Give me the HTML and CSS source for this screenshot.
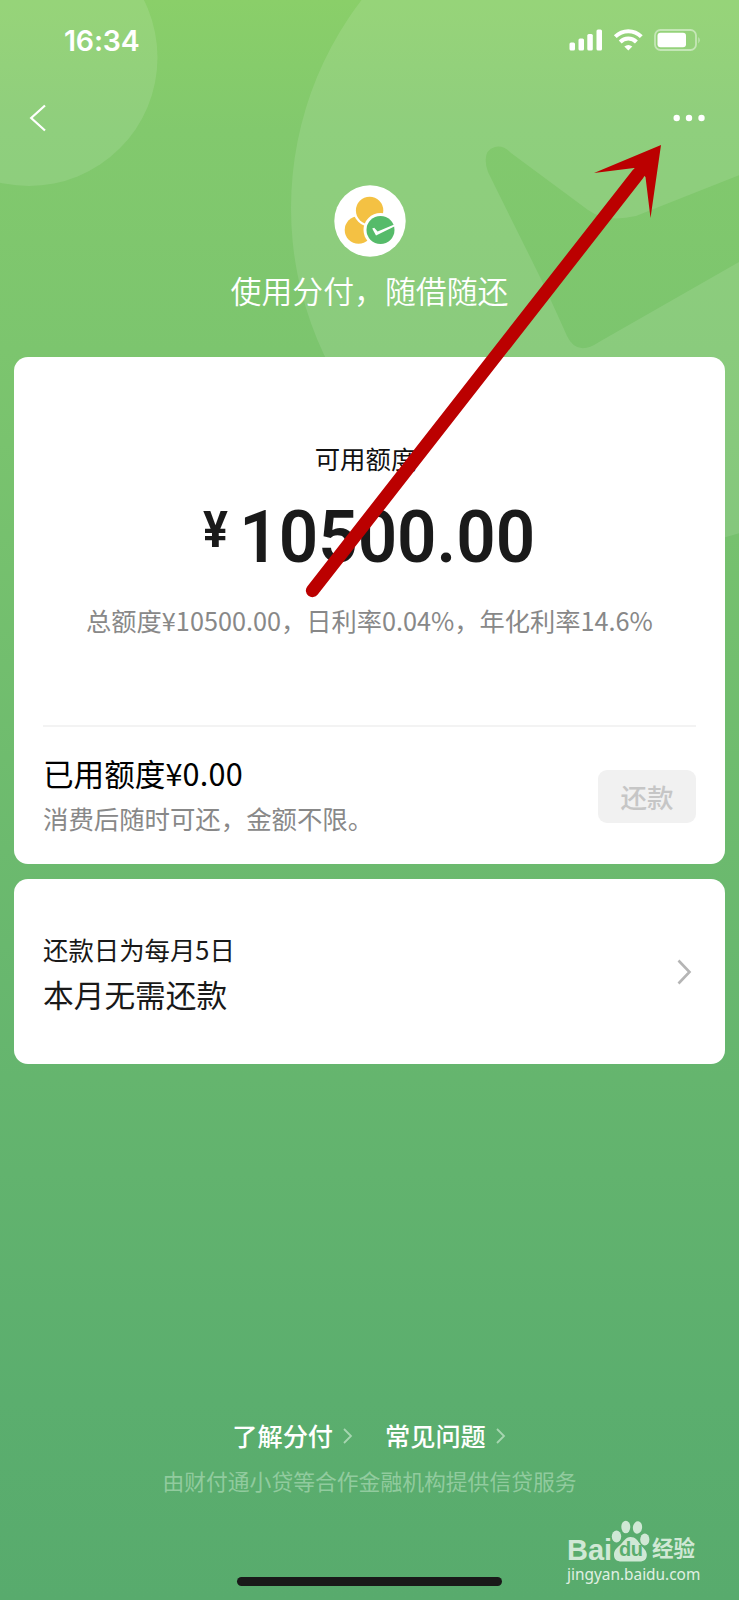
FILE: index.html
```html
<!DOCTYPE html>
<html lang="zh-CN">
<head>
<meta charset="utf-8">
<title>分付</title>
<link rel="stylesheet" href="styles.css">
</head>
<body>
<div class="screen">
  <svg class="backdrop" width="739" height="600" viewBox="0 0 739 600">
    <circle cx="29" cy="57.500" r="128.500" fill="#fff" fill-opacity=".11"/>
    <path fill="#fff" fill-opacity=".11" fill-rule="evenodd" d="M633 -134a342 342 0 1 0 0 684a342 342 0 1 0 0-684zM488 172Q481 151 495 147Q503 145 511 153L588 210Q606 223 636 216L800 151V227L599 342Q577 357 567 336Q560 320 541 279Z"/>
  </svg>

  <header class="status">
    <span class="time">16:34</span>
    <svg class="status-icons" width="134" height="24" viewBox="0 0 134 24">
      <g fill="#fff">
        <rect x="0.500" y="13.500" width="5.500" height="8" rx="1.500"/>
        <rect x="9.500" y="9.500" width="5.500" height="12" rx="1.500"/>
        <rect x="18.300" y="5" width="5.500" height="16.500" rx="1.500"/>
        <rect x="27.500" y="0.500" width="5.500" height="21" rx="1.500"/>
        <path d="M59.300 21.500l-4-4q4-3.200 8 0z"/>
      </g>
      <g fill="none" stroke="#fff" stroke-width="4">
        <path d="M46.300 7.600a18.200 18.200 0 0 1 26 0"/>
        <path d="M51.200 13a11.300 11.300 0 0 1 16.200 0"/>
      </g>
      <rect x="86" y="1" width="41" height="20" rx="5.500" fill="none" stroke="#fff" stroke-opacity=".45" stroke-width="1.800"/>
      <rect x="88.500" y="3.800" width="28.500" height="14.500" rx="3" fill="#fff"/>
      <path d="M129.500 8q2.200 3.200 0 6.400z" fill="#fff" fill-opacity=".6"/>
    </svg>
  </header>

  <nav class="nav">
    <svg width="18" height="28" viewBox="0 0 18 28"><path d="M16 1.500L2.200 14L16 26.500" fill="none" stroke="#fff" stroke-width="2.200"/></svg>
    <svg width="32" height="8" viewBox="0 0 32 8" fill="#fff"><circle cx="3.700" cy="4" r="3.200"/><circle cx="16" cy="4" r="3.200"/><circle cx="28.500" cy="4" r="3.200"/></svg>
  </nav>

  <section class="hero">
    <svg width="72" height="72" viewBox="0 0 72 72">
      <circle cx="36" cy="36" r="35.700" fill="#fff"/>
      <circle cx="24.500" cy="45" r="13.800" fill="#f4c143"/>
      <circle cx="35.600" cy="25.500" r="16" fill="#fff"/>
      <circle cx="35.600" cy="25.500" r="13.700" fill="#f4c143"/>
      <circle cx="46.500" cy="45" r="17" fill="#fff"/>
      <circle cx="46.500" cy="45" r="14" fill="#56bb6a"/>
      <path d="M38.200 43.500L40.200 42.800L43.600 46.500L60.300 39.500V41.500L42 50.600z" fill="#fff"/>
    </svg>
    <h1 class="slogan">使用分付，随借随还</h1>
  </section>

  <main class="cards">
    <section class="card quota">
      <div class="label">可用额度</div>
      <div class="amount"><span class="yen">¥</span><span class="digits">10500.00</span></div>
      <div class="rates">总额度¥10500.00，日利率0.04%，年化利率14.6%</div>
      <div class="used">
        <div>
          <div class="used-title">已用额度<span class="used-sum">¥0.00</span></div>
          <div class="used-note">消费后随时可还，金额不限。</div>
        </div>
        <button class="repay">还款</button>
      </div>
    </section>
    <section class="card due">
      <div>
        <div class="due-day">还款日为每月5日</div>
        <div class="due-state">本月无需还款</div>
      </div>
      <svg width="15" height="26" viewBox="0 0 15 26"><path d="M1.500 1.500L12.500 13L1.500 24.500" fill="none" stroke="#b5b5b5" stroke-width="2.600"/></svg>
    </section>
  </main>

  <footer class="footer">
    <div class="links">
      <span class="link">了解分付<svg width="10" height="16" viewBox="0 0 10 16"><path d="M1 1L8 8L1 15"/></svg></span>
      <span class="link">常见问题<svg width="10" height="16" viewBox="0 0 10 16"><path d="M1 1L8 8L1 15"/></svg></span>
    </div>
    <div class="provider">由财付通小贷等合作金融机构提供信贷服务</div>
    <div class="home-bar"></div>
  </footer>

  <div class="watermark">
    <div class="brand">
      <span class="bai">Bai</span>
      <span class="paw">
        <svg width="39" height="43" viewBox="0 0 39 43" fill="#d0e8d5">
          <ellipse cx="5.500" cy="16.500" rx="4.700" ry="6"/>
          <ellipse cx="14.800" cy="7" rx="4.500" ry="6.300"/>
          <ellipse cx="26.500" cy="7.500" rx="4.600" ry="6.200" transform="rotate(8 26.500 7.500)"/>
          <ellipse cx="33.800" cy="19.500" rx="4.600" ry="6"/>
          <path d="M19.500 17C14.500 17 12.500 22 8.500 25.500C4.500 29 3 31 3 35C3 39.500 6 41.500 10.500 41.500H28.500C33.500 41.500 36 39 35.800 34.500C35.500 30 32 28 29.500 24.500C26.500 20.500 24.500 17 19.500 17z"/>
        </svg>
        <span class="du">du</span>
      </span>
      <span class="jingyan">经验</span>
    </div>
    <div class="site">jingyan.baidu.com</div>
  </div>

  <svg class="arrow" width="739" height="620" viewBox="0 0 739 620">
    <path d="M312.500 590.500L638 174" stroke="#bb0000" stroke-width="13.300" stroke-linecap="round"/>
    <path d="M661 145L594 173L634 168L645.500 177L650.500 218Z" fill="#bb0000"/>
  </svg>
</div>
</body>
</html>
```
FILE: styles.css
```css
* { box-sizing: border-box; margin: 0; }

body { background: #5bae6e; }

.screen {
  position: relative;
  display: flex;
  flex-direction: column;
  width: 739px;
  height: 1600px;
  overflow: hidden;
  font-family: "Noto Sans CJK SC", sans-serif;
  background: linear-gradient(#8acf69 0, #82c96d 130px, #7cc56e 350px, #6cba6e 850px, #5bae6e 1400px, #58ab6d 1600px);
}

.screen > * { position: relative; }
.screen > .backdrop { position: absolute; top: 0; left: 0; }
.screen > .arrow { position: absolute; top: 0; left: 0; fill: none; pointer-events: none; }

.status {
  display: flex;
  justify-content: space-between;
  align-items: center;
  height: 82px;
  padding: 0 36px 0 64px;
}
.time { font: 600 28.5px/40px Inter, sans-serif; letter-spacing: -.2px; color: #fff; }

.nav {
  display: flex;
  justify-content: space-between;
  align-items: center;
  height: 72px;
  padding: 0 34px 0 29px;
}

.hero {
  display: flex;
  flex-direction: column;
  align-items: center;
  height: 203px;
  padding-top: 31px;
}
.slogan {
  margin-top: 13px;
  font-size: 30.9px;
  line-height: 40px;
  font-weight: 350;
  color: #fff;
}

.cards {
  display: flex;
  flex-direction: column;
  gap: 15px;
  padding: 0 14px;
}
.card { background: #fff; border-radius: 14px; }

.quota { height: 507px; padding: 81px 29px 0; text-align: center; }
.label { padding-right: 8px; font-size: 25.4px; line-height: 40px; color: #111; }
.amount {
  display: flex;
  justify-content: center;
  align-items: flex-start;
  gap: 4px;
  height: 90px;
  margin-top: 15px;
  padding-left: 4px;
  font-family: Roboto, sans-serif;
  color: #1a1a1a;
}
.yen { font-size: 50px; line-height: 75px; font-weight: 700; transform: scaleX(.93); }
.digits { font-size: 72px; line-height: 89px; font-weight: 600; transform: scaleX(.96); }
.rates {
  margin-top: 17px;
  font-size: 25.25px;
  line-height: 40px;
  white-space: nowrap;
  color: #888;
}
.used {
  display: flex;
  justify-content: space-between;
  align-items: center;
  height: 140px;
  margin-top: 85px;
  border-top: 2px solid #f3f3f3;
  text-align: left;
}
.used-title { font-size: 30.6px; line-height: 44px; color: #000; }
.used-sum { letter-spacing: .25px; }
.used-note { font-size: 25.4px; line-height: 46px; color: #888; }
.repay {
  width: 98px;
  height: 53px;
  border: 0;
  border-radius: 9px;
  background: #f1f1f1;
  font: 500 26.5px/51px "Noto Sans CJK SC", sans-serif;
  color: #c6c6c6;
}

.due {
  display: flex;
  justify-content: space-between;
  align-items: center;
  height: 185px;
  padding: 0 33px 0 29px;
}
.due-day { font-size: 25.4px; line-height: 44px; color: #191919; }
.due-state { font-size: 30.7px; line-height: 46px; color: #191919; }

.footer {
  display: flex;
  flex-direction: column;
  align-items: center;
  margin-top: 352px;
}
.links { display: flex; gap: 32px; padding-right: 1px; }
.link {
  display: flex;
  align-items: center;
  gap: 10px;
  font-size: 25.2px;
  line-height: 39px;
  font-weight: 500;
  color: #fff;
}
.link svg { fill: none; stroke: #a7d6b1; stroke-width: 1.8; }
.provider { margin-top: 6px; font-size: 21.8px; line-height: 40px; color: #91cb9e; }
.home-bar { width: 265px; height: 9px; margin-top: 76px; border-radius: 5px; background: #191919; }

.screen > .watermark {
  position: absolute;
  left: 567px;
  top: 1520px;
  width: 140px;
  color: #d0e8d5;
}
.brand { display: flex; align-items: flex-end; height: 43px; }
.bai { width: 44px; font: 700 29px/25px "Liberation Sans", sans-serif; }
.paw { position: relative; width: 39px; height: 43px; }
.du {
  position: absolute;
  left: 8px;
  top: 18px;
  font: 700 20px/22px "Liberation Sans", sans-serif;
  letter-spacing: -.5px;
  color: #5aad6e;
}
.jingyan { margin: 0 0 5px 2px; font-size: 21.5px; line-height: 22px; font-weight: 700; }
.site { font: 15.4px/23px "Noto Sans", sans-serif; color: #e0f0e3; }
```
